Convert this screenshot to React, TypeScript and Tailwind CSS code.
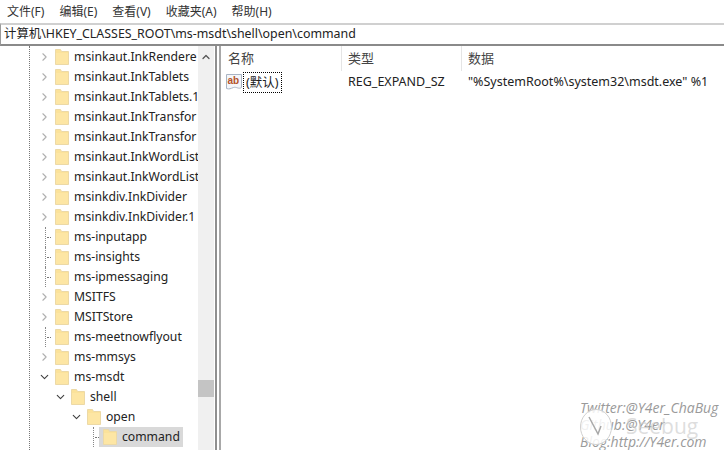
import { ChevronRight, ChevronDown, ChevronUp } from "lucide-react";

type Row = { label: string; depth?: number; arrow?: "right" | "down" | "none"; selected?: boolean };

const rows: Row[] = [
  { label: "msinkaut.InkRendere", arrow: "right" },
  { label: "msinkaut.InkTablets", arrow: "right" },
  { label: "msinkaut.InkTablets.1", arrow: "right" },
  { label: "msinkaut.InkTransfor", arrow: "right" },
  { label: "msinkaut.InkTransfor", arrow: "right" },
  { label: "msinkaut.InkWordList", arrow: "right" },
  { label: "msinkaut.InkWordList", arrow: "right" },
  { label: "msinkdiv.InkDivider", arrow: "right" },
  { label: "msinkdiv.InkDivider.1", arrow: "right" },
  { label: "ms-inputapp", arrow: "none" },
  { label: "ms-insights", arrow: "none" },
  { label: "ms-ipmessaging", arrow: "none" },
  { label: "MSITFS", arrow: "right" },
  { label: "MSITStore", arrow: "right" },
  { label: "ms-meetnowflyout", arrow: "none" },
  { label: "ms-mmsys", arrow: "right" },
  { label: "ms-msdt", arrow: "down" },
  { label: "shell", arrow: "down", depth: 1 },
  { label: "open", arrow: "down", depth: 2 },
  { label: "command", arrow: "none", depth: 3, selected: true },
];

const indent = ["pl-[38px]", "pl-[54px]", "pl-[70px]", "pl-[86px]"];

function Folder() {
  return (
    <svg width="14" height="16" viewBox="0 0 14 16" className="shrink-0">
      <path d="M0.5 0.5h5l1 2h7v13h-13z" fill="#fbe29a" stroke="#ecd9a6" />
      <path d="M1 4h12v11h-12z" fill="#fde6a4" />
    </svg>
  );
}

function TreeRow({ row }: { row: Row }) {
  return (
    <div className={`flex h-5 items-center ${indent[row.depth ?? 0]}`}>
      <span className="relative flex h-5 w-[13px] shrink-0 items-center justify-center">
        {row.arrow === "right" && <ChevronRight size={14} strokeWidth={2} className="text-[#b0b0b0]" />}
        {row.arrow === "down" && <ChevronDown size={14} strokeWidth={2} className="text-[#404040]" />}
        {row.arrow === "none" && (
          <>
            <span className="absolute bottom-0 left-[7px] top-0 border-l border-dotted border-[#888]" />
            <span className="ml-[9px] w-[6px] border-t border-dotted border-[#777]" />
          </>
        )}
      </span>
      <span className={`flex h-5 items-center gap-[5px] pl-1 pr-[3px] ${row.selected ? "bg-[#d9d9d9]" : ""}`}>
        <Folder />
        <span className="whitespace-nowrap">{row.label}</span>
      </span>
    </div>
  );
}

function StringIcon() {
  return (
    <svg width="16" height="18" viewBox="0 0 16 18" className="shrink-0">
      <path d="M0.5 1.5h15v13c-3 2-5-1-8 0s-4 2-7 1z" fill="#f4f6fa" stroke="#a9b4c4" />
      <text x="1.5" y="11" fontSize="10" fontWeight="700" fill="#b5532a" fontFamily="Liberation Sans, sans-serif">
        ab
      </text>
    </svg>
  );
}

function SeebugMark() {
  return (
    <svg width="34" height="38" viewBox="0 0 34 38" className="absolute left-[579px] top-[408px]">
      <ellipse cx="17" cy="19" rx="15.5" ry="17.5" fill="#ffffff" fillOpacity="0.85" stroke="#d0d0d0" />
      <path d="M10 9l9 17 3-8" fill="none" stroke="#a8a8a8" strokeWidth="1.5" />
    </svg>
  );
}

export default function App() {
  return (
    <div className="relative flex h-[450px] w-[724px] flex-col overflow-hidden bg-white text-[12.5px] text-[#222] [font-family:'Noto_Sans','Noto_Sans_CJK_SC',sans-serif]">
      <div className="flex h-[23px] shrink-0 items-center gap-[15px] px-[7px] pt-px text-[12px] text-[#333]">
        <span>文件(F)</span>
        <span>编辑(E)</span>
        <span>查看(V)</span>
        <span>收藏夹(A)</span>
        <span>帮助(H)</span>
      </div>
      <div className="flex h-[23px] shrink-0 items-center border-y-2 border-l border-t-[#d0d0d0] border-b-[#8a8a8a] border-l-[#9a9a9a] pl-[3px] text-[12.4px]">
        计算机\HKEY_CLASSES_ROOT\ms-msdt\shell\open\command
      </div>
      <div className="flex min-h-0 flex-1">
        <div className="relative flex w-[215px] shrink-0 overflow-hidden">
          <div className="w-[198px] overflow-hidden pt-px text-[12.2px]">
            {rows.map((row, i) => (
              <TreeRow key={i} row={row} />
            ))}
          </div>
          <div className="flex w-[16px] flex-col items-center bg-[#f0f0f0]">
            <ChevronUp size={12} strokeWidth={2.5} className="mt-[5px] text-[#555]" />
            <div className="mt-[317px] h-[17px] w-full bg-[#c4c4c4]" />
          </div>
          <div className="absolute bottom-0 left-[29px] top-0 border-l border-dotted border-[#777]" />
        </div>
        <div className="w-[6px] shrink-0 border-x-2 border-l-[#8f8f8f] border-r-[#a8a8a8] bg-white" />
        <div className="min-w-0 flex-1 bg-white">
          <div className="flex h-[25px] items-center text-[13px] text-[#444]">
            <span className="h-full w-[121px] border-r border-[#e5e5e5] pl-[7px] leading-[25px]">名称</span>
            <span className="h-full w-[120px] border-r border-[#e5e5e5] pl-[6px] leading-[25px]">类型</span>
            <span className="pl-[6px]">数据</span>
          </div>
          <div className="flex h-[22px] items-center">
            <span className="flex w-[121px] items-center pl-[5px]">
              <StringIcon />
              <span className="ml-px border border-dotted border-black px-[2px] leading-[19px]">(默认)</span>
            </span>
            <span className="w-[120px] pl-[6px]">REG_EXPAND_SZ</span>
            <span className="whitespace-nowrap pl-[6px]">"%SystemRoot%\system32\msdt.exe" %1</span>
          </div>
        </div>
      </div>
      <div className="absolute left-[580px] top-[399px] text-[14px] italic leading-[17px] text-[#9a9a9a] [font-family:'Open_Sans',sans-serif]">
        <div>Twitter:@Y4er_ChaBug</div>
        <div>Github:@Y4er</div>
        <div>Blog:http://Y4er.com</div>
      </div>
      <SeebugMark />
      <div className="absolute left-[626px] top-[413px] text-[21px] leading-[26px] text-[#cfcfcf]/70 [font-family:'Open_Sans',sans-serif]">
        Seebug
      </div>
    </div>
  );
}
